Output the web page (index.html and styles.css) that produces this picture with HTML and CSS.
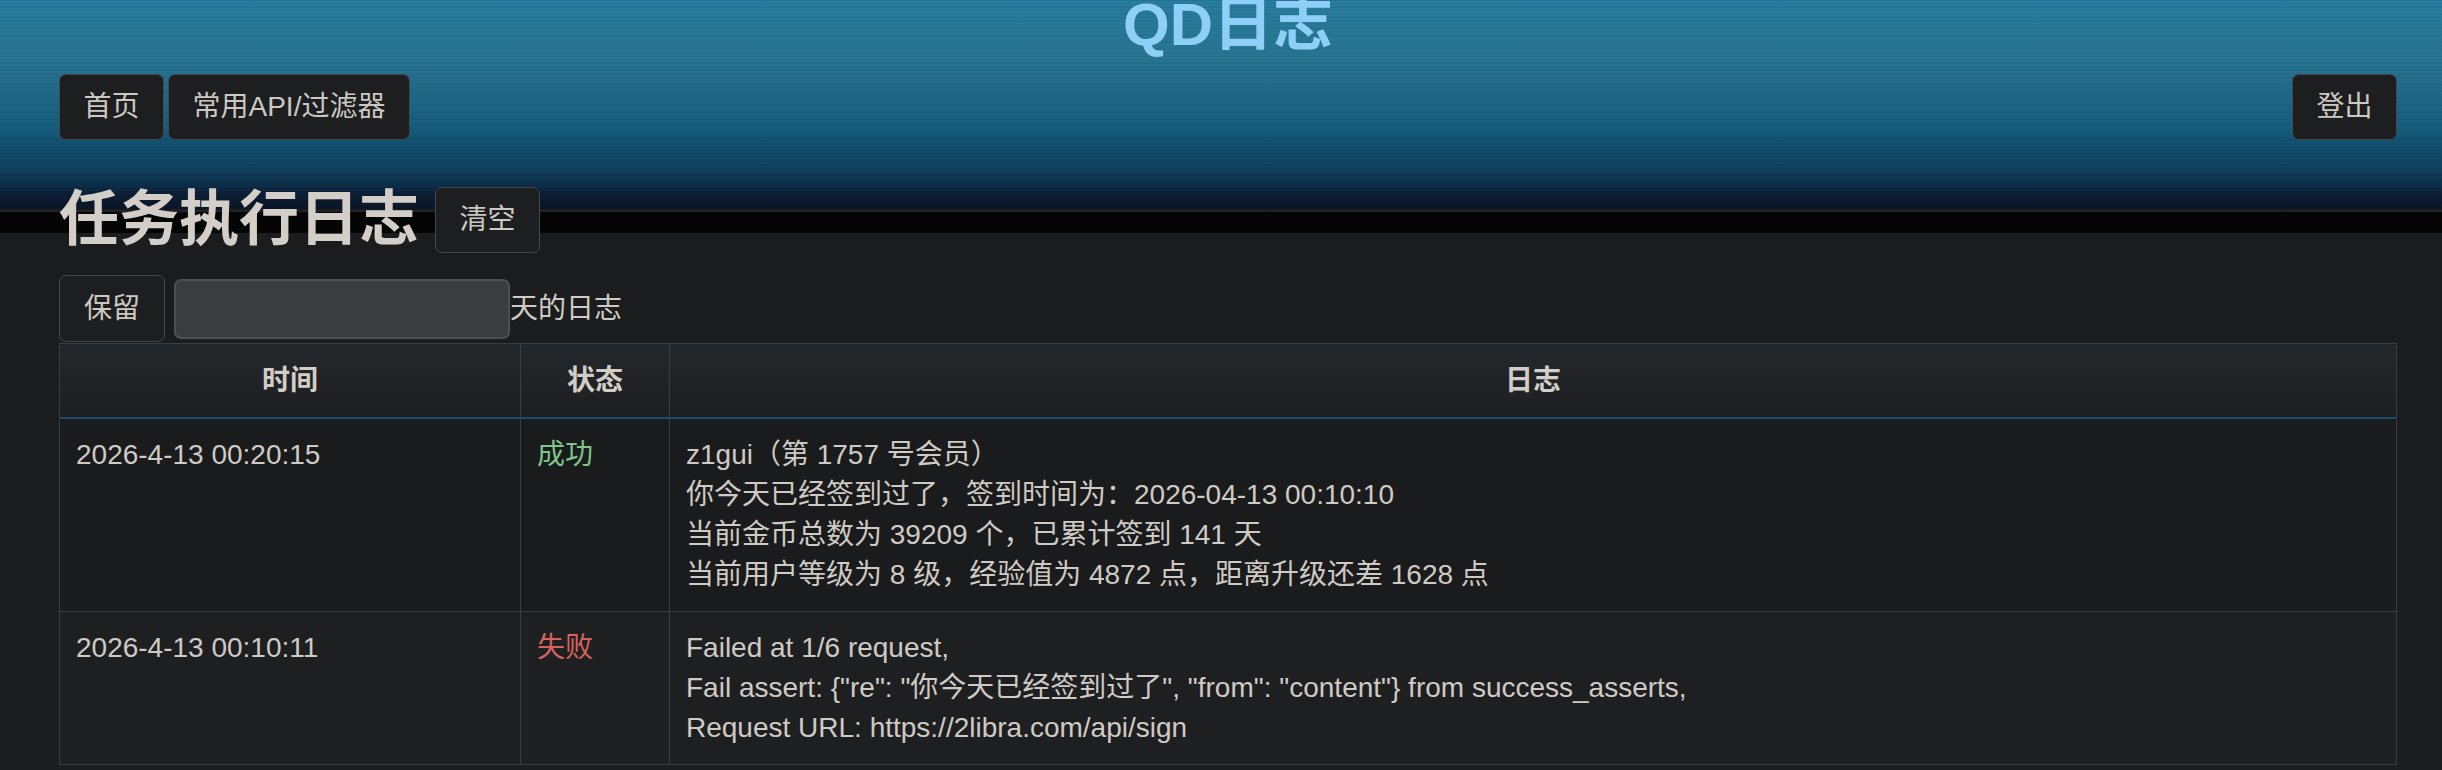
FILE: index.html
```html
<!DOCTYPE html>
<html lang="zh-CN">
<head>
<meta charset="utf-8">
<title>QD日志</title>
<link rel="stylesheet" href="styles.css">
</head>
<body>
<div class="page">
  <h1 class="site-title">QD日志</h1>
  <nav class="topnav">
    <div class="nav-left">
      <a class="btn">首页</a>
      <a class="btn">常用API/过滤器</a>
    </div>
    <a class="btn">登出</a>
  </nav>

  <h2 class="section-title"><span>任务执行日志</span><button class="btn">清空</button></h2>

  <form class="keep-row">
    <button class="btn" type="button">保留</button>
    <input class="days-input" type="text">
    <span class="keep-label">天的日志</span>
  </form>

  <table class="log-table">
    <colgroup>
      <col class="c-time">
      <col class="c-status">
      <col>
    </colgroup>
    <thead>
      <tr><th>时间</th><th>状态</th><th>日志</th></tr>
    </thead>
    <tbody>
      <tr>
        <td>2026-4-13 00:20:15</td>
        <td class="ok">成功</td>
        <td>z1gui（第 1757 号会员）<br>你今天已经签到过了，签到时间为：2026-04-13 00:10:10<br>当前金币总数为 39209 个，已累计签到 141 天<br>当前用户等级为 8 级，经验值为 4872 点，距离升级还差 1628 点</td>
      </tr>
      <tr>
        <td>2026-4-13 00:10:11</td>
        <td class="fail">失败</td>
        <td>Failed at 1/6 request,<br>Fail assert: {"re": "你今天已经签到过了", "from": "content"} from success_asserts,<br>Request URL: https://2libra.com/api/sign</td>
      </tr>
    </tbody>
  </table>
</div>
</body>
</html>
```

FILE: styles.css
```css
html, body {
  margin: 0;
  padding: 0;
}

body {
  font-family: "Liberation Sans", "Noto Sans CJK SC", sans-serif;
  font-size: 28px;
  line-height: 40px;
  color: #cfcac4;
  background-color: #1b1c1d;
  background-image:
    repeating-linear-gradient(to bottom, rgba(0, 0, 0, 0.07) 0 1px, rgba(255, 255, 255, 0.02) 1px 2px, transparent 2px 7px),
    linear-gradient(to bottom,
      #277b9c 0px,
      #27738f 60px,
      #1f6585 100px,
      #145a7a 130px,
      #104b69 150px,
      #0f3f5c 170px,
      #0c2e48 185px,
      #0b1c33 195px,
      #0a1626 209px,
      #222222 210px,
      #222222 212px,
      #050505 212px,
      #050505 233px);
  background-size: 100% 210px, 100% 233px;
  background-repeat: no-repeat;
}

.page {
  padding: 0 45px 0 59px;
}

.site-title {
  margin: 0;
  font-size: 60px;
  line-height: 50px;
  font-weight: bold;
  text-align: center;
  color: #8ecff8;
}

.topnav {
  margin-top: 24px;
  display: flex;
  justify-content: space-between;
  align-items: flex-start;
}

.nav-left {
  display: flex;
  gap: 4px;
}

.btn {
  display: inline-block;
  box-sizing: border-box;
  padding: 12px 23.5px;
  font-family: "Liberation Sans", "Noto Sans CJK SC", sans-serif;
  font-size: 28px;
  line-height: 40px;
  font-weight: normal;
  color: #cdc8c2;
  background: #1c1e1f;
  border: 1px solid #44484c;
  border-radius: 7px;
  text-decoration: none;
  cursor: pointer;
}

.section-title {
  margin: 47px 0 22px;
  display: flex;
  align-items: center;
  gap: 16px;
  font-size: 60px;
  line-height: 66px;
  font-weight: bold;
  color: #d3cec8;
}

.keep-row {
  margin: 0 0 1px;
  display: flex;
  align-items: center;
}

.keep-row .btn {
  padding: 12.5px 24px;
  margin-right: 9px;
}

.days-input {
  box-sizing: border-box;
  width: 336px;
  height: 60px;
  margin: 0;
  background: #3b3c3d;
  border: 2px solid #4b5054;
  border-radius: 7px;
  color: #cfcac4;
  font-size: 28px;
}

.keep-label {
  line-height: 40px;
}

.log-table {
  width: 100%;
  border-collapse: collapse;
  table-layout: fixed;
}

.c-time {
  width: 461px;
}

.c-status {
  width: 149px;
}

.log-table th,
.log-table td {
  border: 1px solid #3a3e41;
  padding: 16px;
  text-align: left;
  vertical-align: top;
}

.log-table th {
  padding-top: 17px;
  text-align: center;
  font-weight: bold;
  color: #d2cdc6;
  background: linear-gradient(to bottom, #25282b, #1c1e20);
  border-bottom: 2px solid #174b70;
}

.log-table tbody tr:nth-child(odd) td {
  background: #1a1b1c;
}

.log-table tbody tr:nth-child(even) td {
  background: #1e1f21;
}

.log-table .ok {
  color: #7fc58a;
}

.log-table .fail {
  color: #d8625e;
}
```
